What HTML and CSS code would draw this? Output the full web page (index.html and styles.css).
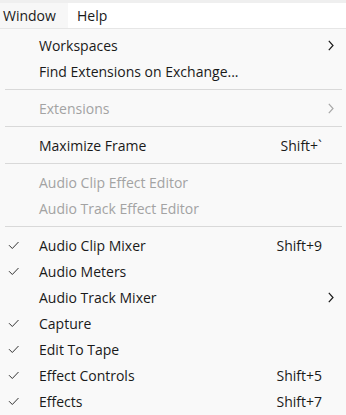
FILE: index.html
```html
<!DOCTYPE html>
<html>
<head>
<meta charset="utf-8">
<link rel="stylesheet" href="styles.css">
</head>
<body>
<div class="top-strip"></div>
<div class="menubar">
  <div class="menubar-item active">Window</div>
  <div class="menubar-item">Help</div>
</div>
<div class="menu">
  <div class="item"><span class="check"></span><span class="label">Workspaces</span><span class="shortcut"></span><span class="arrow"><svg width="6" height="11" viewBox="0 0 6 11"><path d="M0.8 0.8 L5 5.5 L0.8 10.2" fill="none" stroke="#1a1a1a" stroke-width="1.2"/></svg></span></div>
  <div class="item"><span class="check"></span><span class="label">Find Extensions on Exchange...</span><span class="shortcut"></span><span class="arrow"></span></div>
  <div class="sep"></div>
  <div class="item disabled"><span class="check"></span><span class="label">Extensions</span><span class="shortcut"></span><span class="arrow"><svg width="6" height="11" viewBox="0 0 6 11"><path d="M0.8 0.8 L5 5.5 L0.8 10.2" fill="none" stroke="#a8a8a8" stroke-width="1.2"/></svg></span></div>
  <div class="sep"></div>
  <div class="item"><span class="check"></span><span class="label">Maximize Frame</span><span class="shortcut">Shift+`</span><span class="arrow"></span></div>
  <div class="sep"></div>
  <div class="item disabled"><span class="check"></span><span class="label">Audio Clip Effect Editor</span><span class="shortcut"></span><span class="arrow"></span></div>
  <div class="item disabled"><span class="check"></span><span class="label">Audio Track Effect Editor</span><span class="shortcut"></span><span class="arrow"></span></div>
  <div class="sep"></div>
  <div class="item"><span class="check"><svg width="12" height="9" viewBox="0 0 12 9"><path d="M1 4.2 L4.3 7.5 L10.5 1" fill="none" stroke="#333" stroke-width="1"/></svg></span><span class="label">Audio Clip Mixer</span><span class="shortcut">Shift+9</span><span class="arrow"></span></div>
  <div class="item"><span class="check"><svg width="12" height="9" viewBox="0 0 12 9"><path d="M1 4.2 L4.3 7.5 L10.5 1" fill="none" stroke="#333" stroke-width="1"/></svg></span><span class="label">Audio Meters</span><span class="shortcut"></span><span class="arrow"></span></div>
  <div class="item"><span class="check"></span><span class="label">Audio Track Mixer</span><span class="shortcut"></span><span class="arrow"><svg width="6" height="11" viewBox="0 0 6 11"><path d="M0.8 0.8 L5 5.5 L0.8 10.2" fill="none" stroke="#1a1a1a" stroke-width="1.2"/></svg></span></div>
  <div class="item"><span class="check"><svg width="12" height="9" viewBox="0 0 12 9"><path d="M1 4.2 L4.3 7.5 L10.5 1" fill="none" stroke="#333" stroke-width="1"/></svg></span><span class="label">Capture</span><span class="shortcut"></span><span class="arrow"></span></div>
  <div class="item"><span class="check"><svg width="12" height="9" viewBox="0 0 12 9"><path d="M1 4.2 L4.3 7.5 L10.5 1" fill="none" stroke="#333" stroke-width="1"/></svg></span><span class="label">Edit To Tape</span><span class="shortcut"></span><span class="arrow"></span></div>
  <div class="item"><span class="check"><svg width="12" height="9" viewBox="0 0 12 9"><path d="M1 4.2 L4.3 7.5 L10.5 1" fill="none" stroke="#333" stroke-width="1"/></svg></span><span class="label">Effect Controls</span><span class="shortcut">Shift+5</span><span class="arrow"></span></div>
  <div class="item"><span class="check"><svg width="12" height="9" viewBox="0 0 12 9"><path d="M1 4.2 L4.3 7.5 L10.5 1" fill="none" stroke="#333" stroke-width="1"/></svg></span><span class="label">Effects</span><span class="shortcut">Shift+7</span><span class="arrow"></span></div>
</div>
</body>
</html>
```
FILE: styles.css
```css
html, body {
  margin: 0;
  padding: 0;
}
body {
  background: #f9f9f9;
  font-family: "Open Sans", "Noto Sans", sans-serif;
  font-size: 14px;
  color: #1a1a1a;
  overflow: hidden;
}
.top-strip {
  height: 3px;
  background: #efefef;
}
.menubar {
  display: flex;
  height: 25px;
  background: #ffffff;
  border-bottom: 1px solid #e6e6e6;
}
.menubar-item {
  display: flex;
  align-items: center;
  padding: 1px 9px 0 9px;
  line-height: 24px;
}
.menubar-item.active {
  background: #f7f7f7;
  width: 56px;
  padding-left: 3px;
}
.menu {
  padding-top: 3px;
}
.item {
  display: flex;
  align-items: center;
  height: 25px;
  padding-top: 1px;
  line-height: 25px;
  white-space: nowrap;
}
.item.disabled {
  color: #a3a3a3;
}
.check {
  width: 39px;
  flex: none;
  display: flex;
  align-items: center;
}
.check svg {
  margin-left: 8px;
  display: block;
}
.label {
  flex: 1;
}
.shortcut {
  text-align: right;
}
.arrow {
  width: 24px;
  flex: none;
  display: flex;
  align-items: center;
}
.arrow svg {
  margin-left: 6px;
  display: block;
}
.sep {
  height: 1px;
  background: #d9d9d9;
  margin: 5px 4px 5px 5px;
}
```
